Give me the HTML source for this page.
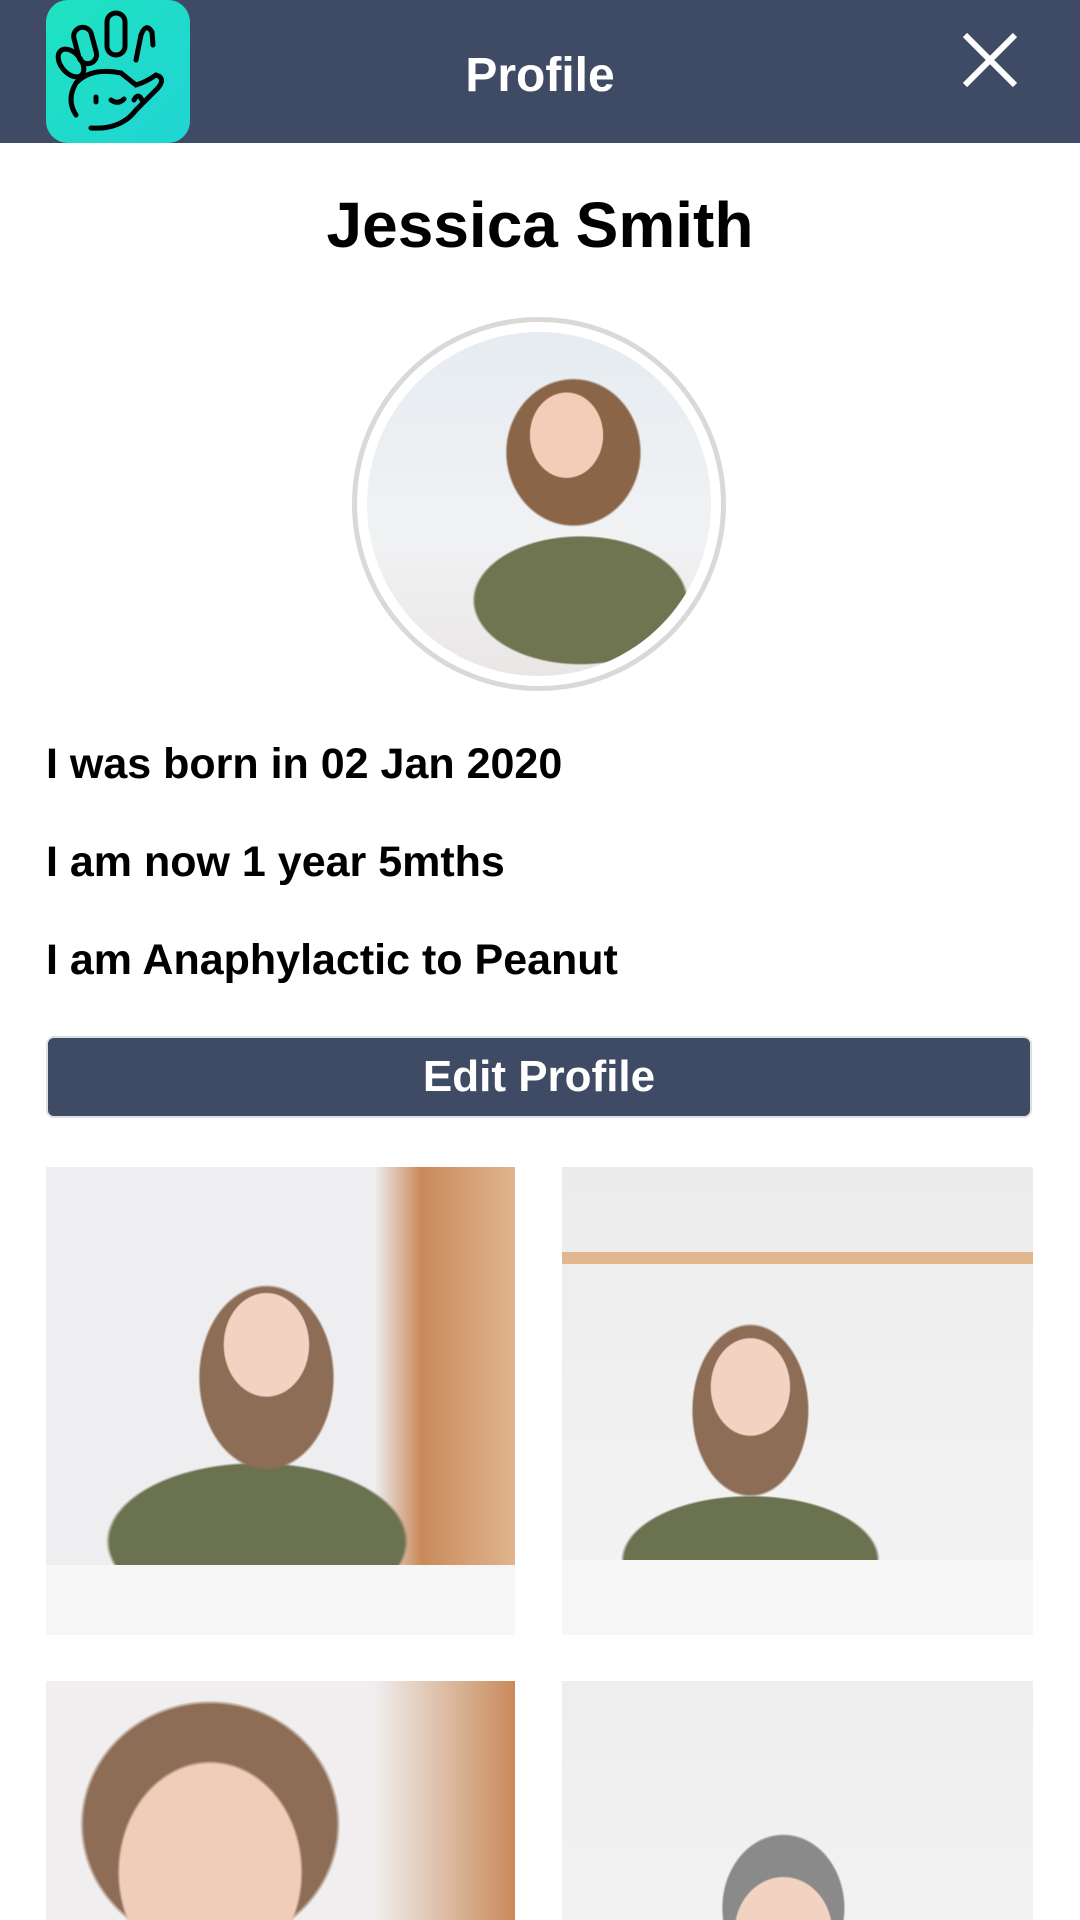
<!DOCTYPE html>
<html><head><meta charset="utf-8"><style>
*{margin:0;padding:0;box-sizing:border-box}
body{width:1080px;height:1920px;overflow:hidden;background:#fff;font-family:"Liberation Sans",sans-serif;position:relative}
.hdr{position:absolute;left:0;top:0;width:1080px;height:143px;background:#3f4a65}
.logo{position:absolute;left:46px;top:0;width:144px;height:143px;border-radius:22px;background:linear-gradient(135deg,#1ee3c0,#20d4d4)}
.title{position:absolute;left:0;width:1080px;top:48px;text-align:center;color:#fff;font-weight:bold;font-size:48px}
.x{position:absolute;left:960px;top:30px}
.name{position:absolute;left:0;width:1080px;top:188px;text-align:center;font-weight:bold;font-size:64px;color:#000}
.av{position:absolute;left:352px;top:317px;width:374px;height:374px;border-radius:50%;border:5px solid #d9d9d9;background:#fff}
.av div{position:absolute;left:10px;top:10px;width:344px;height:344px;border-radius:50%;overflow:hidden;background:
radial-gradient(ellipse 60px 70px at 58% 30%,#f3cdb8 60%,transparent 62%),
radial-gradient(ellipse 110px 120px at 60% 35%,#8a6548 60%,transparent 62%),
radial-gradient(ellipse 150px 90px at 62% 78%,#6f7551 70%,transparent 72%),
linear-gradient(#e6ecf1,#f1f2f4 60%,#eae6e6)}
.t{position:absolute;left:46px;font-weight:bold;font-size:43px;color:#000}
.btn{position:absolute;left:46px;top:1036px;width:986px;height:82px;background:#3f4a65;border-radius:8px;border:2px solid #dcdfe5;color:#fff;font-weight:bold;font-size:44px;text-align:center;line-height:78px}
.p{position:absolute;overflow:hidden}
</style></head><body>
<div class="hdr">
<div class="logo"><svg width="144" height="143" viewBox="0 0 144 143" fill="none" stroke="#000" stroke-width="5" stroke-linecap="round">
<ellipse cx="25" cy="63" rx="10" ry="16" transform="rotate(-40 25 63)"/>
<rect x="30" y="27" width="18" height="37" rx="9" transform="rotate(-15 39 45)"/>
<rect x="61" y="13" width="18" height="42" rx="9"/>
<path d="M90 60 L95 35 Q100 22 106 32 L107 45"/>
<path d="M30 115 Q20 100 30 83 Q45 67 75 73 L90 85 Q100 82 110 75 Q120 78 112 88 L90 110 Q75 130 45 128"/>
<path d="M50 97 L50 102 M65 100 Q72 105 78 99 M88 100 Q92 92 96 100"/>
</svg></div>
<div class="title">Profile</div>
<svg class="x" width="60" height="60" viewBox="0 0 60 60" stroke="#fff" stroke-width="6"><path d="M5 5L55 55M55 5L5 55"/></svg>
</div>
<div class="name">Jessica Smith</div>
<div class="av"><div></div></div>
<div class="t" style="top:740px">I was born in 02 Jan 2020</div>
<div class="t" style="top:838px">I am now 1 year 5mths</div>
<div class="t" style="top:936px">I am Anaphylactic to Peanut</div>
<div class="btn">Edit Profile</div>
<div class="p" style="left:46px;top:1167px;width:469px;height:468px;background:
radial-gradient(ellipse 70px 85px at 47% 38%,#f2d2c0 60%,transparent 62%),
radial-gradient(ellipse 110px 150px at 47% 45%,#8d6d55 60%,transparent 62%),
radial-gradient(ellipse 210px 110px at 45% 80%,#6a7250 70%,transparent 72%),
linear-gradient(90deg,#eeeef0 70%,#c98a5a 80%,#e0b58f 100%)"><div style="position:absolute;left:0;bottom:0;width:100%;height:70px;background:#f6f6f6"></div></div>
<div class="p" style="left:562px;top:1167px;width:471px;height:468px;background:
radial-gradient(ellipse 65px 80px at 40% 47%,#f2d2c0 60%,transparent 62%),
radial-gradient(ellipse 95px 140px at 40% 52%,#8d6d55 60%,transparent 62%),
radial-gradient(ellipse 180px 90px at 40% 84%,#6a7250 70%,transparent 72%),
linear-gradient(#ececec,#f4f4f5)"><div style="position:absolute;left:0;top:85px;width:100%;height:12px;background:#e2b78f"></div><div style="position:absolute;left:0;bottom:0;width:100%;height:75px;background:#f6f6f6"></div></div>
<div class="p" style="left:46px;top:1681px;width:469px;height:239px;background:
radial-gradient(ellipse 150px 180px at 35% 80%,#f0cdb8 60%,transparent 62%),
radial-gradient(ellipse 210px 200px at 35% 60%,#8d6d55 60%,transparent 62%),
linear-gradient(90deg,#f0eeee 70%,#c98a5a)"></div>
<div class="p" style="left:562px;top:1681px;width:471px;height:239px;background:
radial-gradient(ellipse 80px 90px at 47% 105%,#f2d2c0 60%,transparent 62%),
radial-gradient(ellipse 100px 120px at 47% 95%,#8a8a8a 60%,transparent 62%),
linear-gradient(#eeeeee,#f2f2f3)"></div>
</body></html>
